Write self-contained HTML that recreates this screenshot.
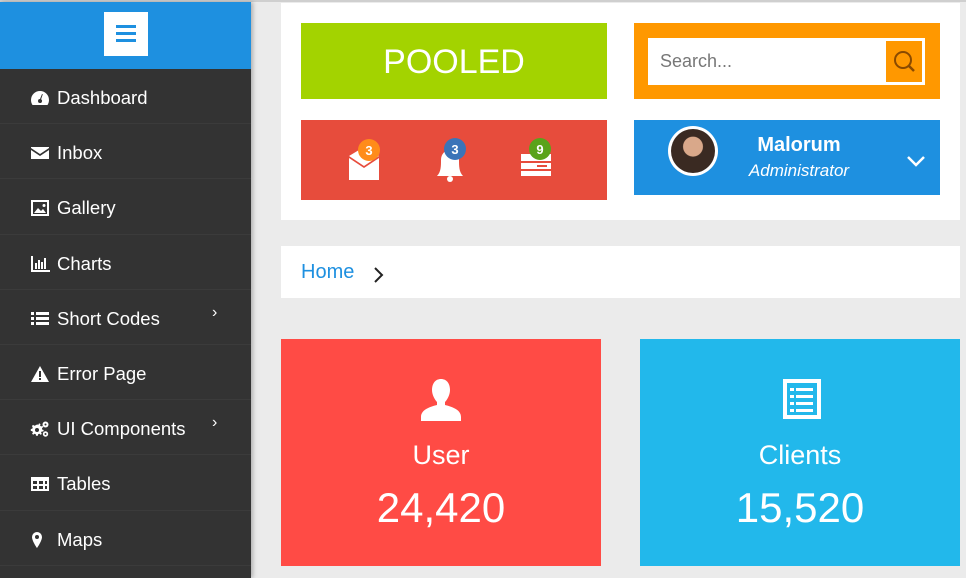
<!DOCTYPE html>
<html><head><style>
*{margin:0;padding:0;box-sizing:border-box}
body{width:966px;height:578px;overflow:hidden;background:#ebebeb;font-family:"Liberation Sans",sans-serif;position:relative}
.topline{position:absolute;left:0;top:0;width:966px;height:2px;background:#cfcfcf}
.side{position:absolute;left:0;top:2px;width:251px;height:576px;background:#333;box-shadow:2px 0 4px rgba(0,0,0,.25)}
.sh{height:67px;background:#1e90e0;position:relative}
.burger{position:absolute;left:104px;top:10px;width:44px;height:44px;background:#fff}
.burger i{position:absolute;left:12px;width:20px;height:3px;background:#1e90e0}
.item{height:55.2px;border-bottom:1px solid #3b3b3b;color:#fff;font-size:18.5px;display:flex;align-items:center;padding-left:30px;padding-top:4px;position:relative}
.item svg{width:20px;height:18px;margin-right:7px;fill:#fff}
.item .ar{position:absolute;left:212px;top:14px;font-size:16px}
.box{position:absolute}
</style></head><body>
<div class="topline"></div>
<div class="side">
 <div class="sh"><div class="burger"><i style="top:13px"></i><i style="top:20px"></i><i style="top:27px"></i></div></div>
 <div class="item"><svg viewBox="0 0 20 18"><path d="M10 2a9 9 0 0 0-9 9c0 2 .6 3.5 1.5 5h15c.9-1.5 1.5-3 1.5-5a9 9 0 0 0-9-9zm0 12a2 2 0 1 1 0-4l2-5 .8.3-1.7 5A2 2 0 0 1 10 14z"/></svg>Dashboard</div>
 <div class="item"><svg viewBox="0 0 20 18"><path d="M1 3h18v1l-9 6-9-6zM1 6l9 6 9-6v9H1z"/></svg>Inbox</div>
 <div class="item"><svg viewBox="0 0 20 18"><path d="M1 1h18v16H1zm2 2v12h14V3zm1 11l4-5 3 3 2-2 3 4zM14 5a1.5 1.5 0 1 1 0 3 1.5 1.5 0 0 1 0-3z"/></svg>Gallery</div>
 <div class="item"><svg viewBox="0 0 20 18"><path d="M1 1h2v14h17v2H1zm4 7h2v6H5zm3-3h2v9H8zm3 2h2v7h-2zm3-4h2v11h-2z"/></svg>Charts</div>
 <div class="item"><svg viewBox="0 0 20 18"><path d="M1 2h3v3H1zm5 0h13v3H6zM1 7h3v3H1zm5 0h13v3H6zM1 12h3v3H1zm5 0h13v3H6z"/></svg>Short Codes<span class="ar">›</span></div>
 <div class="item"><svg viewBox="0 0 20 18"><path d="M10 1l9 16H1zM9 6v6h2V6zm0 7v2h2v-2z" fill-rule="evenodd"/></svg>Error Page</div>
 <div class="item"><svg viewBox="0 0 20 18"><path d="M7 4.5l1.5.3.5-1.5 1.5.8-.5 1.4 1.2 1 1.3-.8.8 1.5-1.3.8.2 1.6 1.5.4-.4 1.6-1.5-.2-.8 1.3.9 1.2-1.3 1-1-1.1-1.5.4-.2 1.5H6l-.2-1.5-1.5-.5-1 1.1-1.3-1 .9-1.3-.6-1.4-1.5-.1V9l1.5-.3.4-1.5L1.9 6l1.2-1.1 1.2.9 1.4-.6z"/><circle cx="7" cy="10" r="2" fill="#333"/><circle cx="15.5" cy="4.5" r="3"/><circle cx="15.5" cy="14" r="2.7"/><circle cx="15.5" cy="4.5" r="1" fill="#333"/><circle cx="15.5" cy="14" r="1" fill="#333"/></svg>UI Components<span class="ar">›</span></div>
 <div class="item"><svg viewBox="0 0 20 18"><path d="M1 2h18v14H1zm2 4v3h4V6zm6 0v3h4V6zm6 0v3h2V6zM3 11v3h4v-3zm6 0v3h4v-3zm6 0v3h2v-3z" fill-rule="evenodd"/></svg>Tables</div>
 <div class="item"><svg viewBox="0 0 20 18"><path d="M7 1a5 5 0 0 0-5 5c0 4 5 11 5 11s5-7 5-11a5 5 0 0 0-5-5zm0 3a2 2 0 1 1 0 4 2 2 0 0 1 0-4z"/></svg>Maps</div>
</div>

<div class="box" style="left:281px;top:3px;width:679px;height:217px;background:#fff"></div>
<div class="box" style="left:301px;top:23px;width:306px;height:76px;background:#a3d300;color:#fff;font-size:34px;display:flex;align-items:center;justify-content:center;padding-top:3px">POOLED</div>
<div class="box" style="left:634px;top:23px;width:306px;height:76px;background:#ff9800"></div>
<div class="box" style="left:648px;top:38px;width:277px;height:47px;background:#fff;color:#777;font-size:18px;line-height:47px;padding-left:12px">Search...</div>
<div class="box" style="left:886px;top:41px;width:36px;height:41px;background:#ff9800"><svg width="36" height="41" viewBox="0 0 36 41"><circle cx="17" cy="19" r="8" fill="none" stroke="#8a4a00" stroke-width="2"/><path d="M23 25l5 5" stroke="#8a4a00" stroke-width="2.5"/></svg></div>

<div class="box" style="left:301px;top:120px;width:306px;height:80px;background:#e74c3c">
 <svg width="306" height="80" viewBox="0 0 306 80">
  <path d="M48 38l15 10 15-10v22H48z" fill="#fff"/><path d="M48 36l15-9 15 9-15 10z" fill="#fff"/>
  <circle cx="68" cy="30" r="11" fill="#ff8c1a"/><text x="68" y="35" font-size="13" font-weight="bold" fill="#fff" text-anchor="middle" font-family="Liberation Sans">3</text>
  <path d="M136 56c4-4 4-10 4-16 0-6 4-10 9-10s9 4 9 10c0 6 0 12 4 16z" fill="#fff"/><circle cx="149" cy="59" r="3" fill="#fff"/>
  <circle cx="154" cy="29" r="11" fill="#3b74b8"/><text x="154" y="34" font-size="13" font-weight="bold" fill="#fff" text-anchor="middle" font-family="Liberation Sans">3</text>
  <rect x="220" y="34" width="30" height="22" fill="#fff"/><rect x="220" y="41" width="30" height="2" fill="#e74c3c"/><rect x="220" y="49" width="30" height="2" fill="#e74c3c"/><rect x="236" y="45" width="10" height="2" fill="#e74c3c"/>
  <circle cx="239" cy="29" r="11" fill="#5aa31a"/><text x="239" y="34" font-size="13" font-weight="bold" fill="#fff" text-anchor="middle" font-family="Liberation Sans">9</text>
 </svg>
</div>
<div class="box" style="left:634px;top:120px;width:306px;height:75px;background:#1e90e0">
 <div style="position:absolute;left:34px;top:6px;width:50px;height:50px;border-radius:50%;background:#fff;padding:3px"><div style="width:44px;height:44px;border-radius:50%;background:radial-gradient(circle at 50% 40%,#d9a88a 0 28%,#3a2a22 30% 100%)"></div></div>
 <div style="position:absolute;left:110px;top:14px;width:110px;text-align:center;color:#fff;font-size:20px;font-weight:bold">Malorum</div>
 <div style="position:absolute;left:100px;top:41px;width:130px;text-align:center;color:#fff;font-size:17px;font-style:italic">Administrator</div>
 <svg style="position:absolute;left:272px;top:34px" width="20" height="14"><path d="M2 3l8 8 8-8" fill="none" stroke="#fff" stroke-width="2.5"/></svg>
</div>

<div class="box" style="left:281px;top:246px;width:679px;height:52px;background:#fff">
 <span style="position:absolute;left:20px;top:15px;font-size:20px;color:#1e90e0">Home</span>
 <svg style="position:absolute;left:92px;top:20px" width="12" height="18"><path d="M2 2l7 7-7 7" fill="none" stroke="#222" stroke-width="2"/></svg>
</div>

<div class="box" style="left:281px;top:339px;width:320px;height:227px;background:#ff4b45;color:#fff;text-align:center">
 <svg style="position:absolute;left:138px;top:40px" width="44" height="42" viewBox="0 0 44 42"><path d="M22 0c-6 0-9 5-9 11 0 5 3 10 5 12v3c-8 2-16 5-16 12v4h40v-4c0-7-8-10-16-12v-3c2-2 5-7 5-12 0-6-3-11-9-11z" fill="#fff"/></svg>
 <div style="position:absolute;left:0;right:0;top:101px;font-size:27px">User</div>
 <div style="position:absolute;left:0;right:0;top:145px;font-size:42px">24,420</div>
</div>
<div class="box" style="left:640px;top:339px;width:320px;height:227px;background:#22b8eb;color:#fff;text-align:center">
 <svg style="position:absolute;left:143px;top:40px" width="38" height="40" viewBox="0 0 38 40"><path d="M0 0h38v40H0zm4 4v32h30V4z" fill="#fff" fill-rule="evenodd"/><path d="M7 9h4v3H7zm6 0h17v3H13zM7 16h4v3H7zm6 0h17v3H13zM7 23h4v3H7zm6 0h17v3H13zM7 30h4v3H7zm6 0h17v3H13z" fill="#fff"/></svg>
 <div style="position:absolute;left:0;right:0;top:101px;font-size:27px">Clients</div>
 <div style="position:absolute;left:0;right:0;top:145px;font-size:42px">15,520</div>
</div>
</body></html>
